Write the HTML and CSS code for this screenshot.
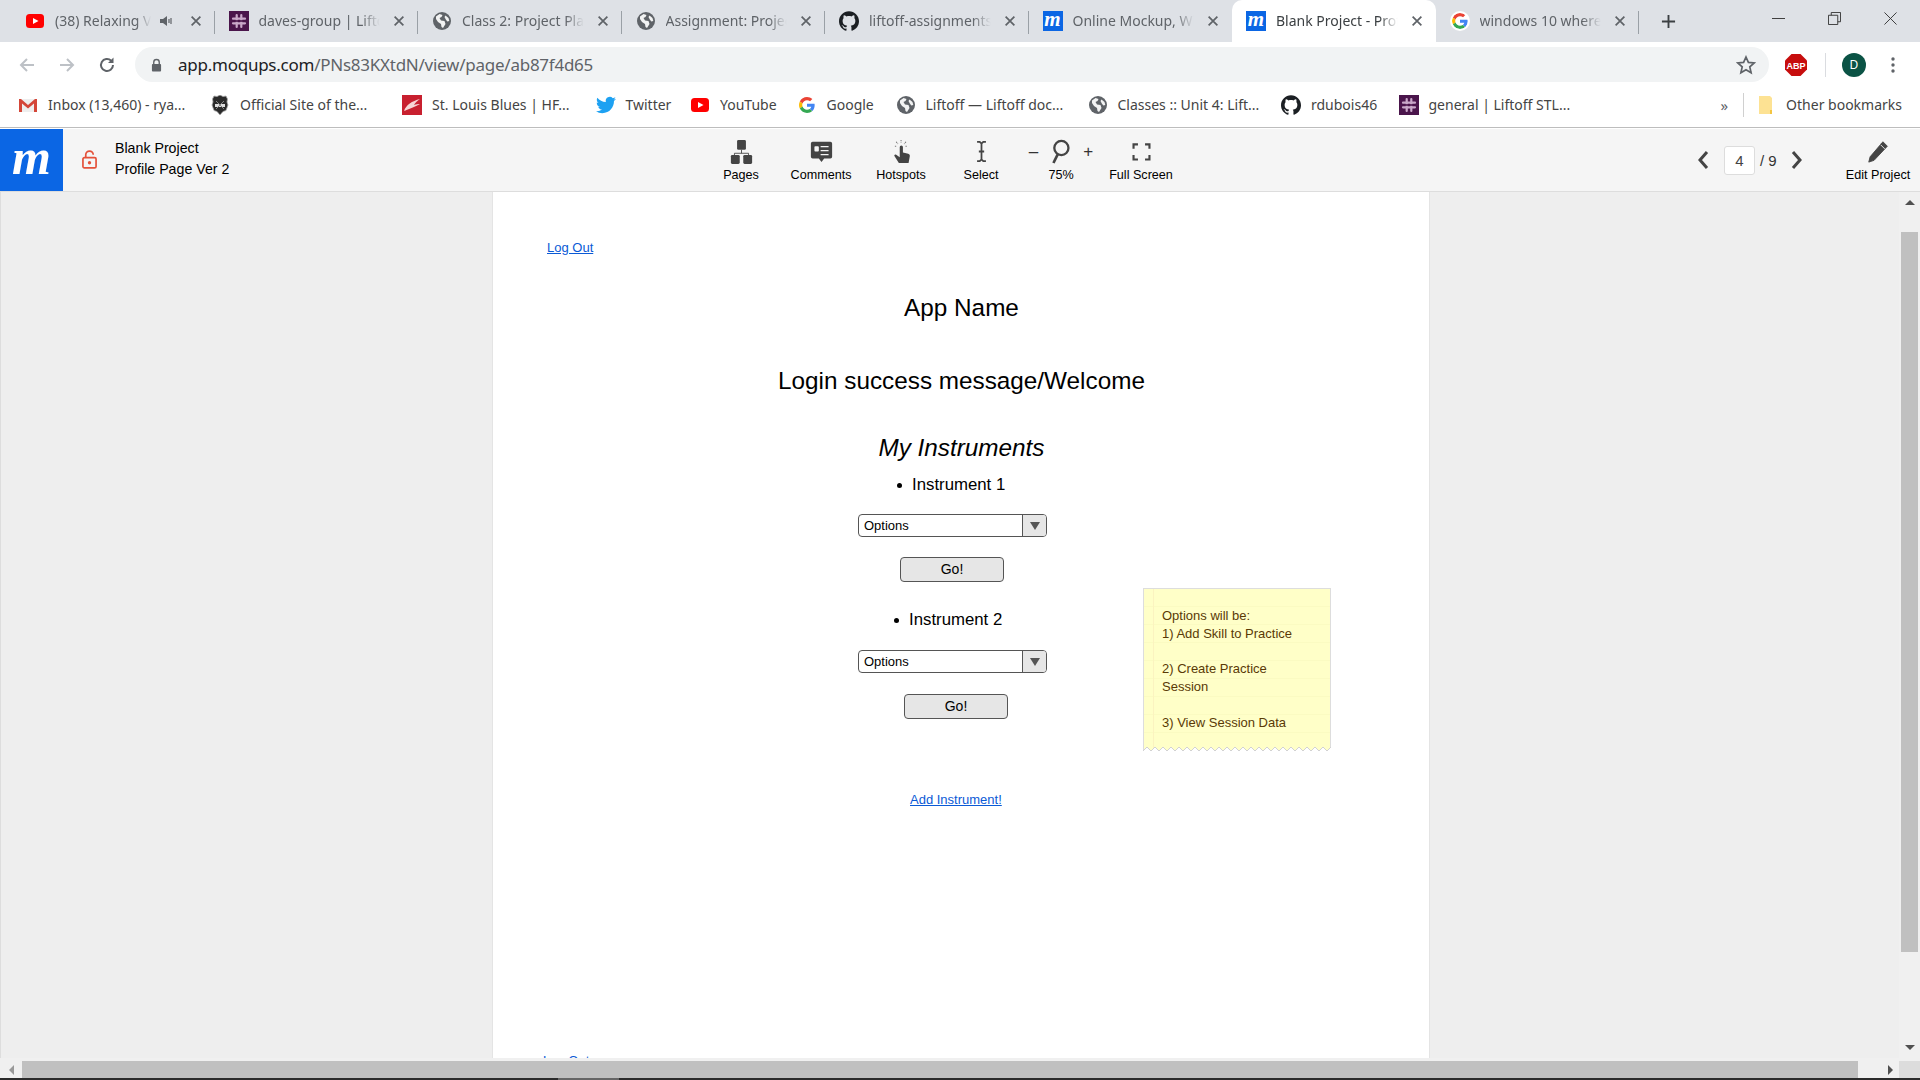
FILE: index.html
```html
<!DOCTYPE html>
<html lang="en">

<head>
  <title>Blank Project - Profile Page Ver 2</title>
  <link rel="stylesheet" href="styles.css">
</head>

<body>
  <svg class="defs" width="0" height="0">
    <symbol id="i-close" viewBox="0 0 16 16"><path d="M3 3l10 10M13 3L3 13" fill="none" stroke="#5f6368" stroke-width="2"/></symbol>
    <symbol id="i-youtube" viewBox="0 0 20 20"><rect x="1" y="3" width="18" height="14" rx="3.5" fill="#f00"/><path d="M8 7l5.5 3L8 13z" fill="#fff"/></symbol>
    <symbol id="i-slack" viewBox="0 0 20 20"><rect width="20" height="20" fill="#4a154b"/><path d="M7.7 4v12M12.3 4v12M4 7.7h12M4 12.3h12" stroke="#c9a8c9" stroke-width="2.2" stroke-linecap="round"/><path d="M5 9.2h10v1.6H5z" fill="#4a154b"/></symbol>
    <symbol id="i-globe" viewBox="0 0 20 20"><circle cx="10" cy="10" r="9" fill="#5f6368"/><path d="M4 5.5l3.5-2.5 3 1-1 2-2 1 1.5 2.5 3.5.5 1 3-2.5 4-1.5-1-.5-3-3-2-2-3zM13.5 4.500l3 2.500.8 3-2 .5-1.500-2-1.300-2.500z" fill="#fff" opacity=".92"/></symbol>
    <symbol id="i-github" viewBox="0 0 24 24"><path fill="#1b1f23" d="M12 .297c-6.63 0-12 5.373-12 12 0 5.303 3.438 9.8 8.205 11.385.6.113.82-.258.82-.577 0-.285-.01-1.04-.015-2.04-3.338.724-4.042-1.61-4.042-1.61C4.422 18.07 3.633 17.7 3.633 17.7c-1.087-.744.084-.729.084-.729 1.205.084 1.838 1.236 1.838 1.236 1.07 1.835 2.809 1.305 3.495.998.108-.776.417-1.305.76-1.605-2.665-.3-5.466-1.332-5.466-5.93 0-1.31.465-2.38 1.235-3.22-.135-.303-.54-1.523.105-3.176 0 0 1.005-.322 3.3 1.23.96-.267 1.98-.399 3-.405 1.02.006 2.04.138 3 .405 2.28-1.552 3.285-1.23 3.285-1.23.645 1.653.24 2.873.12 3.176.765.84 1.23 1.91 1.23 3.22 0 4.61-2.805 5.625-5.475 5.92.42.36.81 1.096.81 2.22 0 1.606-.015 2.896-.015 3.286 0 .315.21.69.825.57C20.565 22.092 24 17.592 24 12.297c0-6.627-5.373-12-12-12"/></symbol>
    <symbol id="i-google" viewBox="0 0 48 48"><path fill="#EA4335" d="M24 9.5c3.54 0 6.71 1.22 9.21 3.6l6.85-6.85C35.9 2.38 30.47 0 24 0 14.62 0 6.51 5.38 2.56 13.22l7.98 6.19C12.43 13.72 17.74 9.5 24 9.5z"/><path fill="#4285F4" d="M46.98 24.55c0-1.57-.15-3.09-.38-4.55H24v9.02h12.94c-.58 2.96-2.26 5.48-4.78 7.18l7.73 6c4.51-4.18 7.09-10.36 7.09-17.65z"/><path fill="#FBBC05" d="M10.53 28.59c-.48-1.45-.76-2.99-.76-4.59s.27-3.14.76-4.59l-7.98-6.19C.92 16.46 0 20.12 0 24c0 3.88.92 7.54 2.56 10.78l7.97-6.19z"/><path fill="#34A853" d="M24 48c6.48 0 11.93-2.13 15.89-5.81l-7.73-6c-2.15 1.45-4.92 2.3-8.16 2.3-6.26 0-11.57-4.22-13.47-9.91l-7.98 6.19C6.51 42.62 14.62 48 24 48z"/></symbol>
    <symbol id="i-gmail" viewBox="0 0 20 20"><path d="M1 4h18v13H1z" fill="#eee"/><path d="M1 17V4h2l7 6 7-6h2v13h-3V8.500l-6 5-6-5V17z" fill="#d44638"/></symbol>
    <symbol id="i-nhl" viewBox="0 0 20 20"><path d="M10 0l3 1.500 3-.5 1.500 3-.5 3 1 3-2 5.500-3 1-3 3.500-3-3.500-3-1-2-5.500 1-3-.5-3L4 1l3 .5z" fill="#2a2a2a" stroke="#aaa" stroke-width=".8"/><path d="M5 9h10v3H5z" fill="#ddd"/><path d="M6 6l8 8M14 6l-8 8" stroke="#888"/></symbol>
    <symbol id="i-blues" viewBox="0 0 20 20"><rect width="20" height="20" fill="#c8202f"/><path d="M2 16c2-6 8-10 16-12-3 2-5 4-6 6 2-1 4-1 6-1-4 2-10 5-16 7z" fill="#f6d5d5"/></symbol>
    <symbol id="i-twitter" viewBox="0 0 24 24"><path fill="#1da1f2" d="M23.953 4.57a10 10 0 01-2.825.775 4.958 4.958 0 002.163-2.723c-.951.555-2.005.959-3.127 1.184a4.92 4.92 0 00-8.384 4.482C7.69 8.095 4.067 6.13 1.64 3.162a4.822 4.822 0 00-.666 2.475c0 1.71.87 3.213 2.188 4.096a4.904 4.904 0 01-2.228-.616v.06a4.923 4.923 0 003.946 4.827 4.996 4.996 0 01-2.212.085 4.936 4.936 0 004.604 3.417 9.867 9.867 0 01-6.102 2.105c-.39 0-.779-.023-1.17-.067a13.995 13.995 0 007.557 2.209c9.053 0 13.998-7.496 13.998-13.985 0-.21 0-.42-.015-.63A9.935 9.935 0 0024 4.59z"/></symbol>
    <pattern id="zigzag" width="8" height="5" patternUnits="userSpaceOnUse"><path d="M-1 6L0 5 4 1l4 4 1 1z" fill="#fff" stroke="#d2d2d2"/></pattern>
  </svg>

  <div class="tabstrip">
    <div class="tab">
      <svg class="favicon"><use href="#i-youtube"/></svg>
      <span class="tab-title">(38) Relaxing Vivaldi</span>
      <svg class="speaker" viewBox="0 0 14 14"><path d="M1 5h3l4-3v10L4 9H1z" fill="#5f6368"/><path d="M10 5v4M12 4v6" stroke="#5f6368" stroke-width="1.2"/></svg>
      <svg class="tab-close"><use href="#i-close"/></svg>
    </div>
    <div class="tab">
      <svg class="favicon"><use href="#i-slack"/></svg>
      <span class="tab-title">daves-group | Liftoff STL</span>
      <svg class="tab-close"><use href="#i-close"/></svg>
    </div>
    <div class="tab">
      <svg class="favicon"><use href="#i-globe"/></svg>
      <span class="tab-title">Class 2: Project Planning</span>
      <svg class="tab-close"><use href="#i-close"/></svg>
    </div>
    <div class="tab">
      <svg class="favicon"><use href="#i-globe"/></svg>
      <span class="tab-title">Assignment: Project Plan</span>
      <svg class="tab-close"><use href="#i-close"/></svg>
    </div>
    <div class="tab">
      <svg class="favicon"><use href="#i-github"/></svg>
      <span class="tab-title">liftoff-assignments/proj</span>
      <svg class="tab-close"><use href="#i-close"/></svg>
    </div>
    <div class="tab tab-before-active">
      <span class="favicon m-icon">m</span>
      <span class="tab-title">Online Mockup, Wirefram</span>
      <svg class="tab-close"><use href="#i-close"/></svg>
    </div>
    <div class="tab tab-active">
      <span class="favicon m-icon">m</span>
      <span class="tab-title">Blank Project - Profile Pa</span>
      <svg class="tab-close"><use href="#i-close"/></svg>
    </div>
    <div class="tab">
      <svg class="favicon favicon-google"><use href="#i-google"/></svg>
      <span class="tab-title">windows 10 where are sc</span>
      <svg class="tab-close"><use href="#i-close"/></svg>
    </div>
    <svg class="new-tab" viewBox="0 0 16 16"><path d="M8 1v14M1 8h14" stroke="#3c4043" stroke-width="2"/></svg>
    <div class="win-buttons">
      <svg viewBox="0 0 14 14"><path d="M0 7h14" stroke="#333" stroke-width="1"/></svg>
      <svg viewBox="0 0 14 14"><path d="M.5 3.500h10v10H.500zM3.500 3.500V.5h10v10h-3" fill="none" stroke="#333"/></svg>
      <svg viewBox="0 0 14 14"><path d="M.5.5l13 13M13.500.5l-13 13" stroke="#333"/></svg>
    </div>
  </div>

  <div class="toolbar">
    <svg class="nav-icon" viewBox="0 0 18 18"><path d="M16 9H3M9 3L3 9l6 6" fill="none" stroke="#bdc1c6" stroke-width="2"/></svg>
    <svg class="nav-icon" viewBox="0 0 18 18"><path d="M2 9h13M9 3l6 6-6 6" fill="none" stroke="#bdc1c6" stroke-width="2"/></svg>
    <svg class="nav-icon" viewBox="0 0 18 18"><path d="M15 9a6 6 0 1 1-1.800-4.300" fill="none" stroke="#5f6368" stroke-width="2"/><path d="M15.500 1.500v5.500H10z" fill="#5f6368"/></svg>
    <div class="omnibox">
      <svg class="omni-lock" viewBox="0 0 12 14"><path d="M3 6V4a3 3 0 0 1 6 0v2" fill="none" stroke="#5f6368" stroke-width="1.500"/><rect x="1" y="6" width="10" height="8" rx="1" fill="#5f6368"/></svg>
      <span class="url"><span class="url-host">app.moqups.com</span>/PNs83KXtdN/view/page/ab87f4d65</span>
      <svg class="omni-star" viewBox="0 0 20 20"><path d="M10 2l2.400 5.400 5.800.6-4.400 3.900 1.300 5.800L10 14.700l-5.100 3 1.300-5.800L1.800 8l5.800-.6z" fill="none" stroke="#5f6368" stroke-width="1.700"/></svg>
    </div>
    <svg class="abp" viewBox="0 0 22 22"><path d="M6.500 0h9L22 6.500v9L15.500 22h-9L0 15.500v-9z" fill="#c70d0d"/><text x="11" y="14.500" text-anchor="middle" class="abp-text">ABP</text></svg>
    <div class="toolbar-sep"></div>
    <div class="avatar">D</div>
    <svg class="dots" viewBox="0 0 4 18"><circle cx="2" cy="3" r="1.700"/><circle cx="2" cy="9" r="1.700"/><circle cx="2" cy="15" r="1.700"/></svg>
  </div>

  <div class="bookmarks">
    <div class="bookmark bm-inbox"><svg class="bm-icon"><use href="#i-gmail"/></svg>Inbox (13,460) - rya...</div>
    <div class="bookmark bm-nhl"><svg class="bm-icon"><use href="#i-nhl"/></svg>Official Site of the...</div>
    <div class="bookmark bm-blues"><svg class="bm-icon"><use href="#i-blues"/></svg>St. Louis Blues | HF...</div>
    <div class="bookmark bm-twitter"><svg class="bm-icon"><use href="#i-twitter"/></svg>Twitter</div>
    <div class="bookmark bm-youtube"><svg class="bm-icon"><use href="#i-youtube"/></svg>YouTube</div>
    <div class="bookmark bm-google"><svg class="bm-icon bm-icon-g"><use href="#i-google"/></svg>Google</div>
    <div class="bookmark bm-liftoff"><svg class="bm-icon"><use href="#i-globe"/></svg>Liftoff — Liftoff doc...</div>
    <div class="bookmark bm-classes"><svg class="bm-icon"><use href="#i-globe"/></svg>Classes :: Unit 4: Lift...</div>
    <div class="bookmark bm-github"><svg class="bm-icon"><use href="#i-github"/></svg>rdubois46</div>
    <div class="bookmark bm-general"><svg class="bm-icon"><use href="#i-slack"/></svg>general | Liftoff STL...</div>
    <div class="bm-end">
      <span class="bm-more">»</span>
      <div class="bm-sep"></div>
      <div class="bookmark"><svg class="bm-icon" viewBox="0 0 20 20"><path d="M3 1h11l2 2v16H3z" fill="#fde293"/><path d="M14 15h2v4h-2z" fill="#f4c542"/></svg>Other bookmarks</div>
    </div>
  </div>

  <div class="appbar">
    <div class="logo">m</div>
    <svg class="lock" viewBox="0 0 16 20"><path d="M4 8V5a4 4 0 0 1 8 0" fill="none" stroke="#e4513a" stroke-width="1.800"/><rect x="1" y="8" width="14" height="11" rx="1.500" fill="none" stroke="#e4513a" stroke-width="1.800"/><circle cx="8" cy="13.500" r="1.800" fill="#e4513a"/></svg>
    <div class="project">
      <div>Blank Project</div>
      <div>Profile Page Ver 2</div>
    </div>
    <div class="tools">
      <div class="tool">
        <svg class="tool-icon" viewBox="0 0 26 28"><rect x="8" y="1" width="10" height="11" rx="1.500" fill="#444"/><path d="M13 12v4M5 18v-2h16v2" fill="none" stroke="#444"/><rect x="1" y="18" width="10" height="10" rx="1.500" fill="#444"/><rect x="15" y="18" width="10" height="10" rx="1.500" fill="#444"/></svg>
        <span>Pages</span>
      </div>
      <div class="tool">
        <svg class="tool-icon" viewBox="0 0 26 28"><path d="M3 3h20a2 2 0 0 1 2 2v15a2 2 0 0 1-2 2h-7l-3 4-3-4H3a2 2 0 0 1-2-2V5a2 2 0 0 1 2-2z" fill="#444"/><rect x="5" y="8" width="5" height="6" rx="1" fill="#f5f5f5"/><path d="M12 8.500h9M12 13h9M12 17.500h9" stroke="#f5f5f5" stroke-width="1.600"/></svg>
        <span>Comments</span>
      </div>
      <div class="tool">
        <svg class="tool-icon" viewBox="0 0 26 28"><path d="M11 9a1.800 1.800 0 0 1 3.600 0v6l6 1.500c1.500.4 2 1.500 1.800 3L21 27H10l-5-8c-.6-1 .8-2.300 2-1.400l4 3z" fill="#444"/><path d="M12.500 1v3M7 3l2 2.500M18 3l-2 2.500M5.500 8h2.500M17.500 8H20" stroke="#777" stroke-width="1.200" stroke-dasharray="1.500 1"/></svg>
        <span>Hotspots</span>
      </div>
      <div class="tool">
        <svg class="tool-icon" viewBox="0 0 26 28"><path d="M8 3h3l2 2 2-2h3M8 25h3l2-2 2 2h3M13 5v18M10 14h6" fill="none" stroke="#444" stroke-width="2"/></svg>
        <span>Select</span>
      </div>
      <div class="tool tool-zoom">
        <div class="zoom-row">
          <span class="zoom-sign">–</span>
          <svg class="tool-icon" viewBox="0 0 26 28"><circle cx="14" cy="10" r="8" fill="none" stroke="#444" stroke-width="2.600"/><path d="M10 17L5 27" stroke="#444" stroke-width="3"/></svg>
          <span class="zoom-sign">+</span>
        </div>
        <span>75%</span>
      </div>
      <div class="tool">
        <svg class="tool-icon" viewBox="0 0 26 28"><path d="M4 11V6h5M17 6h5v5M22 18v5h-5M9 23H4v-5" fill="none" stroke="#444" stroke-width="2.400"/></svg>
        <span>Full Screen</span>
      </div>
    </div>
    <div class="pager">
      <svg class="chevron" viewBox="0 0 12 20"><path d="M10 2L3 10l7 8" fill="none" stroke="#444" stroke-width="3"/></svg>
      <div class="page-input">4</div>
      <span class="page-total">/ 9</span>
      <svg class="chevron" viewBox="0 0 12 20"><path d="M2 2l7 8-7 8" fill="none" stroke="#444" stroke-width="3"/></svg>
    </div>
    <div class="tool tool-edit">
      <svg class="tool-icon" viewBox="0 0 26 28"><path d="M18 3l5 5L8 24l-6 2 1.500-6zM16 5l5 5" fill="#444" stroke="#444"/><path d="M15.500 6.500l4.500 4.500" stroke="#f5f5f5" stroke-width="1"/></svg>
      <span>Edit Project</span>
    </div>
  </div>

  <div class="workspace">
    <div class="canvas">
      <div class="page">
        <a class="mock-link logout">Log Out</a>
        <div class="mock-heading app-name">App Name</div>
        <div class="mock-heading welcome">Login success message/Welcome</div>
        <div class="mock-heading my-instruments">My Instruments</div>
        <div class="instrument instrument-1">Instrument 1</div>
        <div class="select select-1"><span>Options</span><div class="select-arrow"></div></div>
        <div class="go go-1">Go!</div>
        <div class="instrument instrument-2">Instrument 2</div>
        <div class="select select-2"><span>Options</span><div class="select-arrow"></div></div>
        <div class="go go-2">Go!</div>
        <div class="sticky">
          <p>Options will be:<br>1) Add Skill to Practice</p>
          <p>2) Create Practice<br>Session</p>
          <p>3) View Session Data</p>
          <svg class="sticky-edge"><rect width="100%" height="5" fill="url(#zigzag)"/></svg>
        </div>
        <a class="mock-link add-instrument">Add Instrument!</a>
        <a class="mock-link logout-2">Log Out</a>
      </div>
    </div>
    <div class="vscroll">
      <div class="tri tri-up"></div>
      <div class="vthumb"></div>
      <div class="tri tri-down"></div>
    </div>
  </div>

  <div class="hscroll-wrap">
    <div class="hscroll">
      <div class="harrow"><div class="tri tri-left"></div></div>
      <div class="hthumb"></div>
      <div class="harrow harrow-right"><div class="tri tri-right"></div></div>
      <div class="corner"></div>
    </div>
  </div>
  <div class="taskstrip"><div class="task-active"></div></div>
</body>

</html>
```

FILE: styles.css
```css
html {
  overflow: hidden;
}

body {
  margin: 0;
  width: 1920px;
  height: 1080px;
  overflow: hidden;
  display: flex;
  flex-direction: column;
  font-family: "Liberation Sans", Arial, sans-serif;
  background: #fff;
}

.defs {
  position: absolute;
}

/* browser chrome */
.tabstrip {
  height: 42px;
  flex: none;
  display: flex;
  align-items: stretch;
  padding-left: 11px;
  background: #dee1e6;
}

.tab {
  width: 203.5px;
  flex: none;
  box-sizing: border-box;
  display: flex;
  align-items: center;
  padding: 0 12px 1px 14px;
  position: relative;
}

.tab::after {
  content: "";
  position: absolute;
  right: 0;
  top: 11px;
  bottom: 8px;
  width: 1px;
  background: #9aa0a6;
}

.tab-before-active::after,
.tab-active::after {
  display: none;
}

.tab-active {
  background: #fff;
  border-radius: 10px 10px 0 0;
}

.favicon {
  width: 20px;
  height: 20px;
  flex: none;
  margin-right: 10px;
}

.favicon-google {
  background: #fff;
  border-radius: 50%;
  padding: 2px;
  box-sizing: border-box;
}

.m-icon {
  background: #0b66e4;
  color: #fff;
  font: italic bold 21px/16px "Liberation Serif", serif;
  text-align: center;
  overflow: hidden;
}

.tab-title {
  flex: 1;
  min-width: 0;
  margin-right: 5px;
  white-space: nowrap;
  overflow: hidden;
  font: 14px "Noto Sans", sans-serif;
  color: #5f6368;
  -webkit-mask-image: linear-gradient(to right, #000 84%, transparent 99%);
  mask-image: linear-gradient(to right, #000 84%, transparent 99%);
}

.tab-active .tab-title {
  color: #3c4043;
}

.speaker {
  width: 14px;
  height: 14px;
  flex: none;
  margin: 0 10px 0 2px;
}

.tab-close {
  width: 14px;
  height: 14px;
  flex: none;
  margin-left: 6px;
}

.new-tab {
  width: 15px;
  height: 15px;
  margin: 14px 0 0 22px;
}

.win-buttons {
  display: flex;
  gap: 43px;
  margin-left: auto;
  margin-right: 23px;
  padding-top: 12px;
}

.win-buttons svg {
  width: 13px;
  height: 13px;
}

.toolbar {
  height: 40px;
  flex: none;
  box-sizing: border-box;
  display: flex;
  align-items: center;
  padding: 5px 0 0 18px;
  background: #fff;
}

.nav-icon {
  width: 18px;
  height: 18px;
  margin-right: 22px;
  flex: none;
}

.omnibox {
  width: 1634px;
  height: 35px;
  margin-left: -3px;
  flex: none;
  display: flex;
  align-items: center;
  box-sizing: border-box;
  padding: 0 13px 0 16px;
  background: #f1f3f4;
  border-radius: 18px;
}

.omni-lock {
  width: 11px;
  height: 14px;
  flex: none;
  margin-right: 16px;
}

.url {
  font: 17px "Noto Sans", sans-serif;
  letter-spacing: -0.25px;
  color: #5f6368;
  white-space: nowrap;
}

.url-host {
  color: #202124;
}

.omni-star {
  width: 20px;
  height: 20px;
  margin-left: auto;
}

.abp {
  width: 22px;
  height: 22px;
  margin-left: 16px;
  flex: none;
}

.abp-text {
  font: bold 9px "Liberation Sans", sans-serif;
  fill: #fff;
}

.toolbar-sep {
  width: 1px;
  height: 24px;
  margin-left: 18px;
  background: #dadce0;
}

.avatar {
  width: 24px;
  height: 24px;
  margin-left: 16px;
  border-radius: 50%;
  background: #0b5345;
  color: #fff;
  font: 12px/24px "Noto Sans", sans-serif;
  text-align: center;
}

.dots {
  width: 4px;
  height: 18px;
  margin-left: 25px;
  fill: #5f6368;
}

.bookmarks {
  height: 46px;
  flex: none;
  box-sizing: border-box;
  display: flex;
  align-items: center;
  padding-left: 18px;
  background: #fff;
  border-bottom: 1px solid #bdbdbd;
}

.bookmark {
  display: flex;
  align-items: center;
  gap: 10px;
  flex: none;
  font: 14px "Noto Sans", sans-serif;
  color: #444;
  white-space: nowrap;
}

.bm-icon {
  width: 20px;
  height: 20px;
  flex: none;
}

.bm-icon-g {
  padding: 2px;
  box-sizing: border-box;
}

.bm-inbox { width: 192px; }
.bm-nhl { width: 192px; }
.bm-blues { width: 193.5px; }
.bm-twitter { width: 94.5px; }
.bm-youtube { width: 106.5px; }
.bm-google { width: 99px; }
.bm-liftoff { width: 192px; }
.bm-classes { width: 193.5px; }
.bm-github { width: 117.5px; }

.bm-end {
  margin-left: auto;
  display: flex;
  align-items: center;
  padding-right: 18px;
}

.bm-more {
  font: 15px "Noto Sans", sans-serif;
  color: #5f6368;
}

.bm-sep {
  width: 1px;
  height: 24px;
  margin: 0 12px 0 15px;
  background: #d0d0d0;
}

/* moqups bar */
.appbar {
  height: 62px;
  flex: none;
  margin-top: 1px;
  display: flex;
  align-items: stretch;
  background: #f5f5f5;
  font-size: 12.6px;
  color: #000;
}

.logo {
  width: 63px;
  flex: none;
  background: #0b66e4;
  color: #fff;
  font: italic bold 50px/56px "Liberation Serif", serif;
  text-align: center;
}

.lock {
  width: 15px;
  height: 19px;
  flex: none;
  margin: 21px 0 0 19px;
}

.project {
  width: 604px;
  flex: none;
  box-sizing: border-box;
  padding: 9px 0 0 18px;
  font-size: 14.2px;
  line-height: 21px;
}

.tools {
  display: flex;
  flex: none;
}

.tool {
  width: 80px;
  flex: none;
  display: flex;
  flex-direction: column;
  align-items: center;
  padding-top: 10px;
  box-sizing: border-box;
  line-height: 15px;
}

.tool-icon {
  width: 23px;
  height: 25px;
  margin-bottom: 4px;
}

.zoom-row .tool-icon {
  margin-bottom: 0;
}

.zoom-row {
  display: flex;
  align-items: center;
  gap: 11px;
  margin-bottom: 4px;
}

.zoom-row .zoom-sign {
  font-size: 17px;
  color: #333;
}

.pager {
  display: flex;
  align-items: center;
  margin-left: 516px;
  height: 62px;
}

.chevron {
  width: 12px;
  height: 20px;
  flex: none;
}

.page-input {
  width: 31px;
  height: 29px;
  margin: 0 5px 0 15px;
  box-sizing: border-box;
  background: #fff;
  border: 1px solid #ddd;
  border-radius: 3px;
  font-size: 15px;
  line-height: 27px;
  text-align: center;
  color: #444;
}

.page-total {
  width: 31px;
  font-size: 15px;
  color: #333;
}

.tool-edit {
  margin-left: 35px;
}

/* canvas */
.workspace {
  flex: 1;
  min-height: 0;
  display: flex;
  border-top: 1px solid #ddd;
}

.canvas {
  flex: 1;
  min-width: 0;
  overflow: hidden;
  padding-left: 492px;
  background: #eee;
  border-left: 1px solid #ddd;
  box-sizing: border-box;
}

.page {
  width: 936px;
  height: 866px;
  position: relative;
  overflow: hidden;
  background: #fff;
  color: #000;
  box-shadow: 0 0 0 1px #e4e4e4;
}

/* widgets on the mockup page, coordinates relative to the page */
.mock-link {
  position: absolute;
  font-size: 13px;
  line-height: 15px;
  color: #0a5ad6;
  text-decoration: underline;
  white-space: nowrap;
}

.logout { left: 54px; top: 48px; }
.logout-2 { left: 50px; top: 861px; }
.add-instrument { left: 417px; top: 600px; }

.mock-heading {
  position: absolute;
  left: 2.5px;
  width: 932px;
  font-size: 24.3px;
  line-height: 28px;
  text-align: center;
  white-space: nowrap;
}

.app-name { top: 102px; }
.welcome { top: 175px; }
.my-instruments { top: 242px; font-style: italic; }

.instrument {
  position: absolute;
  font-size: 16.8px;
  line-height: 20px;
  white-space: nowrap;
}

.instrument::before {
  content: "";
  position: absolute;
  left: -15px;
  top: 8px;
  width: 5px;
  height: 5px;
  border-radius: 50%;
  background: #000;
}

.instrument-1 { left: 419px; top: 283px; }
.instrument-2 { left: 416px; top: 418px; }

.select {
  position: absolute;
  left: 365px;
  width: 189px;
  height: 23px;
  box-sizing: border-box;
  display: flex;
  align-items: center;
  padding-left: 5px;
  background: #fff;
  border: 1.5px solid #555;
  border-radius: 4px;
  font-size: 13px;
  overflow: hidden;
}

.select span {
  flex: 1;
}

.select-arrow {
  width: 23px;
  height: 100%;
  display: flex;
  align-items: center;
  justify-content: center;
  background: #e6e6e6;
  border-left: 1.5px solid #555;
}

.select-arrow::after {
  content: "";
  border-left: 5px solid transparent;
  border-right: 5px solid transparent;
  border-top: 8px solid #555;
}

.select-1 { top: 322px; }
.select-2 { top: 458px; }

.go {
  position: absolute;
  width: 104px;
  height: 25px;
  box-sizing: border-box;
  background: #e6e6e6;
  border: 1.5px solid #555;
  border-radius: 4px;
  font-size: 14px;
  line-height: 22px;
  text-align: center;
}

.go-1 { left: 407px; top: 365px; }
.go-2 { left: 411px; top: 502px; }

.sticky {
  position: absolute;
  left: 650px;
  top: 396px;
  width: 188px;
  height: 163px;
  box-sizing: border-box;
  padding: 18px 20px 0 18px;
  border: 1px solid #ddd;
  border-bottom: 0;
  font-size: 13px;
  line-height: 17.7px;
  color: #5a3a06;
  background:
    linear-gradient(90deg, transparent 9px, #fbf3c0 9px, #fbf3c0 10px, transparent 10px),
    repeating-linear-gradient(180deg, #ffffc8 0, #ffffc8 17px, #fbfbc2 17px, #fbfbc2 18px);
}

.sticky p {
  margin: 0 0 18px;
}

.sticky-edge {
  position: absolute;
  left: -1px;
  bottom: 0;
  width: 188px;
  height: 5px;
}

/* page scrollbars */
.vscroll {
  width: 21px;
  flex: none;
  display: flex;
  flex-direction: column;
  align-items: center;
  background: #f0f0f0;
}

.vthumb {
  width: 17px;
  height: 720px;
  margin-top: 27px;
  background: #c0c0c0;
}

.tri {
  width: 0;
  height: 0;
}

.tri-up {
  margin-top: 8px;
  border-left: 5px solid transparent;
  border-right: 5px solid transparent;
  border-bottom: 5px solid #505050;
}

.tri-down {
  margin-top: 93px;
  border-left: 5px solid transparent;
  border-right: 5px solid transparent;
  border-top: 5px solid #505050;
}

.hscroll-wrap {
  height: 20px;
  flex: none;
  background: #f0f0f0;
  box-sizing: border-box;
  padding-top: 3px;
}

.hscroll {
  height: 17px;
  display: flex;
}

.harrow {
  width: 22px;
  flex: none;
  display: flex;
  align-items: center;
  justify-content: center;
  background: #f0f0f0;
}

.harrow-right {
  width: 41px;
  justify-content: flex-end;
  padding-right: 6px;
  box-sizing: border-box;
}

.hthumb {
  flex: 1;
  background: #c0c0c0;
}

.corner {
  width: 21px;
  flex: none;
  background: #dcdcdc;
}

.tri-left {
  border-top: 5px solid transparent;
  border-bottom: 5px solid transparent;
  border-right: 5px solid #999;
}

.tri-right {
  border-top: 5px solid transparent;
  border-bottom: 5px solid transparent;
  border-left: 5px solid #505050;
}

.taskstrip {
  height: 2px;
  flex: none;
  padding-left: 558px;
  background: #2b2b2b;
}

.task-active {
  width: 61px;
  height: 2px;
  background: #666;
}
```
